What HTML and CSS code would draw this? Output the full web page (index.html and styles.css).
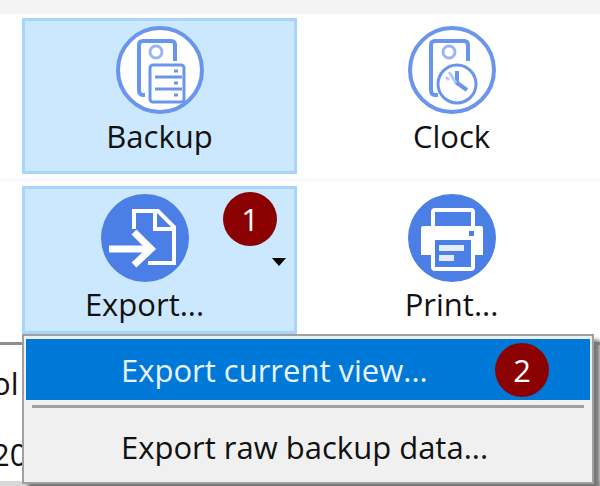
FILE: index.html
```
<!DOCTYPE html>
<html lang="en">
<head>
  <meta charset="utf-8">
  <title>Export menu</title>
  <link rel="stylesheet" href="styles.css">
</head>
<body>
  <div class="toolbar">
    <div class="row">
      <button type="button" class="tile active">
        <svg class="icon" viewBox="0 0 88 88" fill="none" stroke="#6a95ec" stroke-width="3">
          <circle cx="44" cy="44" r="42" fill="#fff" stroke-width="4"/>
          <path d="M29 69h-2q-4 0-4-5V19q0-4 4-4h28q4 0 4 4v16" stroke-width="4"/>
          <circle cx="40" cy="26" r="6" stroke="#9ab6f2"/>
          <rect x="34" y="39" width="34" height="37" rx="3"/>
          <path d="M39 51h27M39 63h27"/>
          <path d="M58 45h4M58 57h4M58 69h4"/>
        </svg>
        <span class="label">Backup</span>
      </button>
      <button type="button" class="tile">
        <svg class="icon" viewBox="0 0 88 88" fill="none" stroke="#6a95ec" stroke-width="3">
          <circle cx="44" cy="44" r="42" fill="#fff" stroke-width="4"/>
          <path d="M30 69h-3q-4 0-4-5V19q0-4 4-4h29q4 0 4 4v16" stroke-width="4"/>
          <circle cx="41" cy="26" r="6" stroke="#9ab6f2"/>
          <circle cx="49" cy="58" r="19"/>
          <path d="M49 45v12l10 7" stroke-width="4"/>
          <path d="M38 51l3 3M41 46l7 11" stroke="#b4c9f6"/>
        </svg>
        <span class="label">Clock</span>
      </button>
    </div>
    <div class="row">
      <div class="split active">
        <button type="button" class="tile">
          <svg class="icon" viewBox="0 0 88 88" fill="none" stroke="#fff">
            <circle cx="44" cy="44" r="44" fill="#4b7fe5" stroke="none"/>
            <path d="M33 35V17h24l16 16v36H47" stroke-width="4"/>
            <path d="M54 18v17h18" stroke-width="4"/>
            <path d="M8 55h42" stroke-width="7"/>
            <path d="M33 38l17 17-17 16" stroke-width="7"/>
          </svg>
          <span class="label">Export...</span>
        </button>
        <button type="button" class="arrow" aria-label="Export options">
          <svg width="14" height="8" viewBox="0 0 14 8"><path d="M0 0h14L7 8z" fill="#000"/></svg>
        </button>
        <span class="badge">1</span>
      </div>
      <button type="button" class="tile">
        <svg class="icon" viewBox="0 0 88 88" fill="none" stroke="#fff">
          <circle cx="44" cy="44" r="44" fill="#4b7fe5" stroke="none"/>
          <path d="M15 32h58q2 0 2 2v27H13V34q0-2 2-2z" fill="#fff" stroke="none"/>
          <path d="M25 35V18q0-2 2-2h36q2 0 2 2v17" stroke-width="4"/>
          <path d="M25 46h40v29H25z" fill="#4b7fe5" stroke="none"/>
          <path d="M25 46v27q0 2 2 2h36q2 0 2-2V46" stroke-width="4"/>
          <path d="M31 54h25M31 64h15" stroke-width="6" stroke="#e4ecfc"/>
          <rect x="61" y="37" width="5" height="5" fill="#4b7fe5" stroke="none"/>
        </svg>
        <span class="label">Print...</span>
      </button>
    </div>
  </div>

  <div class="content">
    <table class="list">
      <tr><th>ol</th></tr>
      <tr><td>20</td></tr>
    </table>
    <div class="menu" role="menu">
      <button type="button" class="item selected" role="menuitem">Export current view...<span class="badge">2</span></button>
      <hr class="separator">
      <button type="button" class="item" role="menuitem">Export raw backup data...</button>
    </div>
  </div>
</body>
</html>
```
FILE: styles.css
```
* {
  box-sizing: border-box;
}
body {
  margin: 0;
  background: #fff;
  color: #111;
  font-family: "Open Sans", "Noto Sans", sans-serif;
  font-size: 31px;
  line-height: 36px;
  overflow: hidden;
}
button {
  margin: 0;
  padding: 0;
  border: none;
  background: none;
  color: inherit;
  font: inherit;
}
.toolbar {
  border-top: 14px solid #f3f3f3;
}
.row {
  display: grid;
  grid-template-columns: 1fr 1fr;
  gap: 17px;
  padding: 4px 11px 4px 22px;
}
.row + .row {
  border-top: 4px solid #f8f9fd;
  padding-bottom: 0;
}
.tile {
  display: flex;
  flex-direction: column;
  align-items: center;
  gap: 4px;
  height: 156px;
  padding-top: 8px;
}
.row + .row .tile {
  height: 148px;
}
.icon {
  width: 88px;
  height: 88px;
}
.active {
  background: #cce8ff;
  box-shadow: inset 0 0 0 3px #a6d5fd;
}
.split {
  display: flex;
  position: relative;
}
.split .tile {
  flex: 1;
}
.arrow {
  width: 30px;
  line-height: 0;
  padding-right: 6px;
}
.badge {
  position: absolute;
  width: 54px;
  height: 54px;
  border-radius: 50%;
  background: #8b0000;
  color: #fff;
  line-height: 54px;
  text-align: center;
}
.split .badge {
  top: 6px;
  right: 20px;
}

.content {
  position: relative;
  padding-top: 8px;
}
.list {
  width: 100%;
  border-top: 3px solid #8a8d92;
  border-bottom: 8px solid #d8d8d8;
  border-spacing: 0;
  text-indent: -8px;
}
.list th,
.list td {
  height: 68px;
  padding: 8px 0 0;
  font-weight: normal;
  text-align: left;
}
.list td {
  padding-top: 14px;
}
.menu {
  position: absolute;
  top: 0;
  left: 22px;
  right: 6px;
  padding: 3px 2px 2px;
  border: 2px solid #a0a0a0;
  background: #f0f0f0;
  box-shadow: 6px 6px 4px #777;
}
.item {
  display: block;
  position: relative;
  width: 100%;
  height: 69px;
  padding: 2px 0 0 95px;
  text-align: left;
}
.selected {
  height: 61px;
  padding-top: 0;
  background: #0078d7;
  color: #e8f4ff;
}
.selected .badge {
  top: 4px;
  right: 41px;
  color: #fff;
}
.separator {
  height: 3px;
  margin: 5px 6px 3px;
  border: none;
  background: #a0a0a0;
}
```
